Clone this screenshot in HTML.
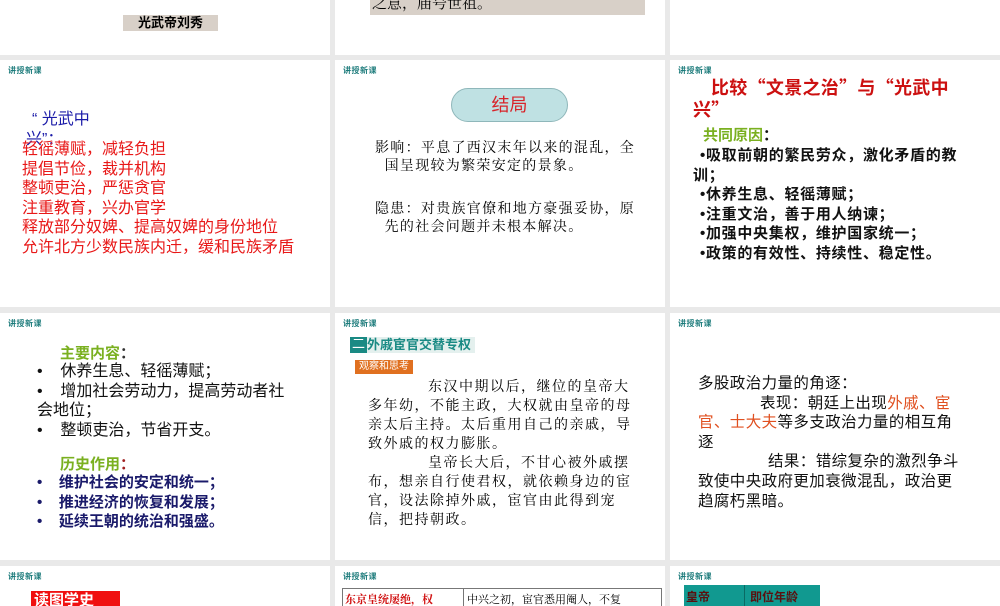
<!DOCTYPE html>
<html><head><meta charset="utf-8"><style>
*{margin:0;padding:0;box-sizing:border-box}
body{width:1000px;height:600px;background:#e9e9e9;position:relative;overflow:hidden;font-family:"Liberation Sans","Noto Sans CJK SC",sans-serif}
.s{position:absolute;background:#fff;overflow:hidden}
.a{position:absolute;white-space:nowrap}
.h{position:absolute;left:8px;top:5px;font-size:8px;color:#1a7a7a;font-weight:bold;letter-spacing:0.5px}
.serif{font-family:"Liberation Serif","Noto Serif CJK SC",serif}
.cjk{font-family:"Noto Sans CJK SC",sans-serif}
</style></head><body>
<!-- row1 -->
<div class="s" style="left:0;top:0;width:330px;height:55px">
 <div class="a" style="left:123px;top:15px;width:95px;height:16px;background:#d8d0c8;font-size:13px;font-weight:bold;text-align:center;line-height:16px">光武帝刘秀</div>
</div>
<div class="s" style="left:335px;top:0;width:330px;height:55px">
 <div class="a serif" style="left:35px;top:-6px;width:275px;height:21px;background:#d8d0c8;font-size:15px;line-height:21px;padding-left:2px">之意，庙号世祖。</div>
</div>
<div class="s" style="left:670px;top:0;width:330px;height:55px"></div>
<!-- row2 -->
<div class="s" style="left:0;top:60px;width:330px;height:247px">
 <div class="h">讲授新课</div>
 <div class="a" style="left:32px;top:50px;font-size:16px;color:#1a1aa8;line-height:20px">“ 光武中<br><span style="margin-left:-6px">兴”：</span></div>
 <div class="a" style="left:22px;top:80px;font-size:16px;color:#e81818;line-height:19.6px">轻徭薄赋，减轻负担<br>提倡节俭，裁并机构<br>整顿吏治，严惩贪官<br>注重教育，兴办官学<br>释放部分奴婢、提高奴婢的身份地位<br>允许北方少数民族内迁，缓和民族矛盾</div>
</div>
<div class="s" style="left:335px;top:60px;width:330px;height:247px">
 <div class="h">讲授新课</div>
 <div class="a" style="left:116px;top:28px;width:117px;height:34px;border-radius:17px;background:#bfe1e3;border:1px solid #8fb7ba;color:#d8242a;font-size:18px;text-align:center;line-height:32px">结局</div>
 <div class="a serif" style="left:40px;top:80px;font-size:14px;line-height:18px;letter-spacing:1.3px">影响：平息了西汉末年以来的混乱，全<br>&nbsp;&nbsp;国呈现较为繁荣安定的景象。</div>
 <div class="a serif" style="left:40px;top:141px;font-size:14px;line-height:18px;letter-spacing:1.3px">隐患：对贵族官僚和地方豪强妥协，原<br>&nbsp;&nbsp;先的社会问题并未根本解决。</div>
</div>
<div class="s" style="left:670px;top:60px;width:330px;height:247px">
 <div class="h">讲授新课</div>
 <div class="a cjk" style="left:41px;top:16px;font-size:18px;font-weight:bold;color:#cc1010;line-height:22px;letter-spacing:0.3px">比较“文景之治”与“光武中<br><span style="margin-left:-18px">兴”</span></div>
 <div class="a" style="left:33px;top:66px;font-size:15px;font-weight:bold;color:#7ab020;line-height:19.6px">共同原因<span style="color:#111">：</span></div>
 <div class="a" style="left:30px;top:86px;font-size:15px;font-weight:bold;color:#111;line-height:19.6px;letter-spacing:0.7px">•吸取前朝的繁民劳众，激化矛盾的教<br><span style="margin-left:-7px">训；</span><br>•休养生息、轻徭薄赋；<br>•注重文治，善于用人纳谏；<br>•加强中央集权，维护国家统一；<br>•政策的有效性、持续性、稳定性。</div>
</div>
<!-- row3 -->
<div class="s" style="left:0;top:313px;width:330px;height:247px">
 <div class="h">讲授新课</div>
 <div class="a" style="left:60px;top:29px;font-size:15px;font-weight:bold;color:#7ab020">主要内容<span style="color:#333">：</span></div>
 <div class="a" style="left:37px;top:49px;font-size:16px;color:#111;line-height:19.6px">•&nbsp;&nbsp;&nbsp;&nbsp;休养生息、轻徭薄赋；<br>•&nbsp;&nbsp;&nbsp;&nbsp;增加社会劳动力，提高劳动者社<br>会地位；<br>•&nbsp;&nbsp;&nbsp;&nbsp;整顿吏治，节省开支。</div>
 <div class="a" style="left:60px;top:140px;font-size:15px;font-weight:bold;color:#7ab020">历史作用<span style="color:#a02020">：</span></div>
 <div class="a" style="left:37px;top:160px;font-size:15px;font-weight:bold;color:#1a1a6a;line-height:19.6px">•&nbsp;&nbsp;&nbsp;&nbsp;维护社会的安定和统一；<br>•&nbsp;&nbsp;&nbsp;&nbsp;推进经济的恢复和发展；<br>•&nbsp;&nbsp;&nbsp;&nbsp;延续王朝的统治和强盛。</div>
</div>
<div class="s" style="left:335px;top:313px;width:330px;height:247px">
 <div class="h">讲授新课</div>
 <div class="a" style="left:15px;top:24px;width:125px;height:16px;background:#e4f0ee"></div>
 <div class="a" style="left:15px;top:24px;width:17px;height:16px;background:#1a8a84;color:#fff;font-size:13px;line-height:14px;text-align:center">二</div>
 <div class="a" style="left:32px;top:24px;font-size:13px;font-weight:bold;color:#1a8a84;line-height:16px">外戚宦官交替专权</div>
 <div class="a" style="left:20px;top:47px;width:58px;height:14px;background:#e07020;color:#fff;font-size:10px;line-height:14px;text-align:center">观察和思考</div>
 <div class="a serif" style="left:33px;top:65px;font-size:14px;line-height:19px;letter-spacing:1.5px"><span style="margin-left:60px"></span>东汉中期以后，继位的皇帝大<br>多年幼，不能主政，大权就由皇帝的母<br>亲太后主持。太后重用自己的亲戚，导<br>致外戚的权力膨胀。<br><span style="margin-left:60px"></span>皇帝长大后，不甘心被外戚摆<br>布，想亲自行使君权，就依赖身边的宦<br>官，设法除掉外戚，宦官由此得到宠<br>信，把持朝政。</div>
</div>
<div class="s" style="left:670px;top:313px;width:330px;height:247px">
 <div class="h">讲授新课</div>
 <div class="a" style="left:28px;top:61px;font-size:15.5px;color:#111;line-height:19.6px;letter-spacing:0.4px">多股政治力量的角逐：<br><span style="margin-left:62px"></span>表现：朝廷上出现<span style="color:#e05020">外戚、宦</span><br><span style="color:#e05020">官、士大夫</span>等多支政治力量的相互角<br>逐<br><span style="margin-left:70px"></span>结果：错综复杂的激烈争斗<br>致使中央政府更加衰微混乱，政治更<br>趋腐朽黑暗。</div>
</div>
<!-- row4 -->
<div class="s" style="left:0;top:566px;width:330px;height:40px">
 <div class="h">讲授新课</div>
 <div class="a" style="left:31px;top:25px;width:89px;height:20px;background:#f01010;color:#fff;font-size:15px;font-weight:bold;padding-left:3px;line-height:20px">读图学史</div>
</div>
<div class="s" style="left:335px;top:566px;width:330px;height:40px">
 <div class="h">讲授新课</div>
 <div class="a" style="left:7px;top:22px;width:320px;height:20px;border:1px solid #777"></div>
 <div class="a" style="left:128px;top:22px;width:1px;height:20px;background:#777"></div>
 <div class="a serif" style="left:10px;top:25px;font-size:11px;color:#d01010;font-weight:bold">东京皇统屡绝，权</div>
 <div class="a serif" style="left:132px;top:25px;font-size:11px">中兴之初，宦官悉用阉人，不复</div>
</div>
<div class="s" style="left:670px;top:566px;width:330px;height:40px">
 <div class="h">讲授新课</div>
 <div class="a" style="left:14px;top:19px;width:136px;height:25px;background:#119990"></div>
 <div class="a" style="left:74px;top:19px;width:1px;height:25px;background:#0a6a64"></div>
 <div class="a" style="left:16px;top:22px;font-size:12px;font-weight:bold;color:#5a1010">皇帝</div>
 <div class="a" style="left:80px;top:22px;font-size:12px;font-weight:bold;color:#5a1010">即位年龄</div>
</div>
</body></html>
